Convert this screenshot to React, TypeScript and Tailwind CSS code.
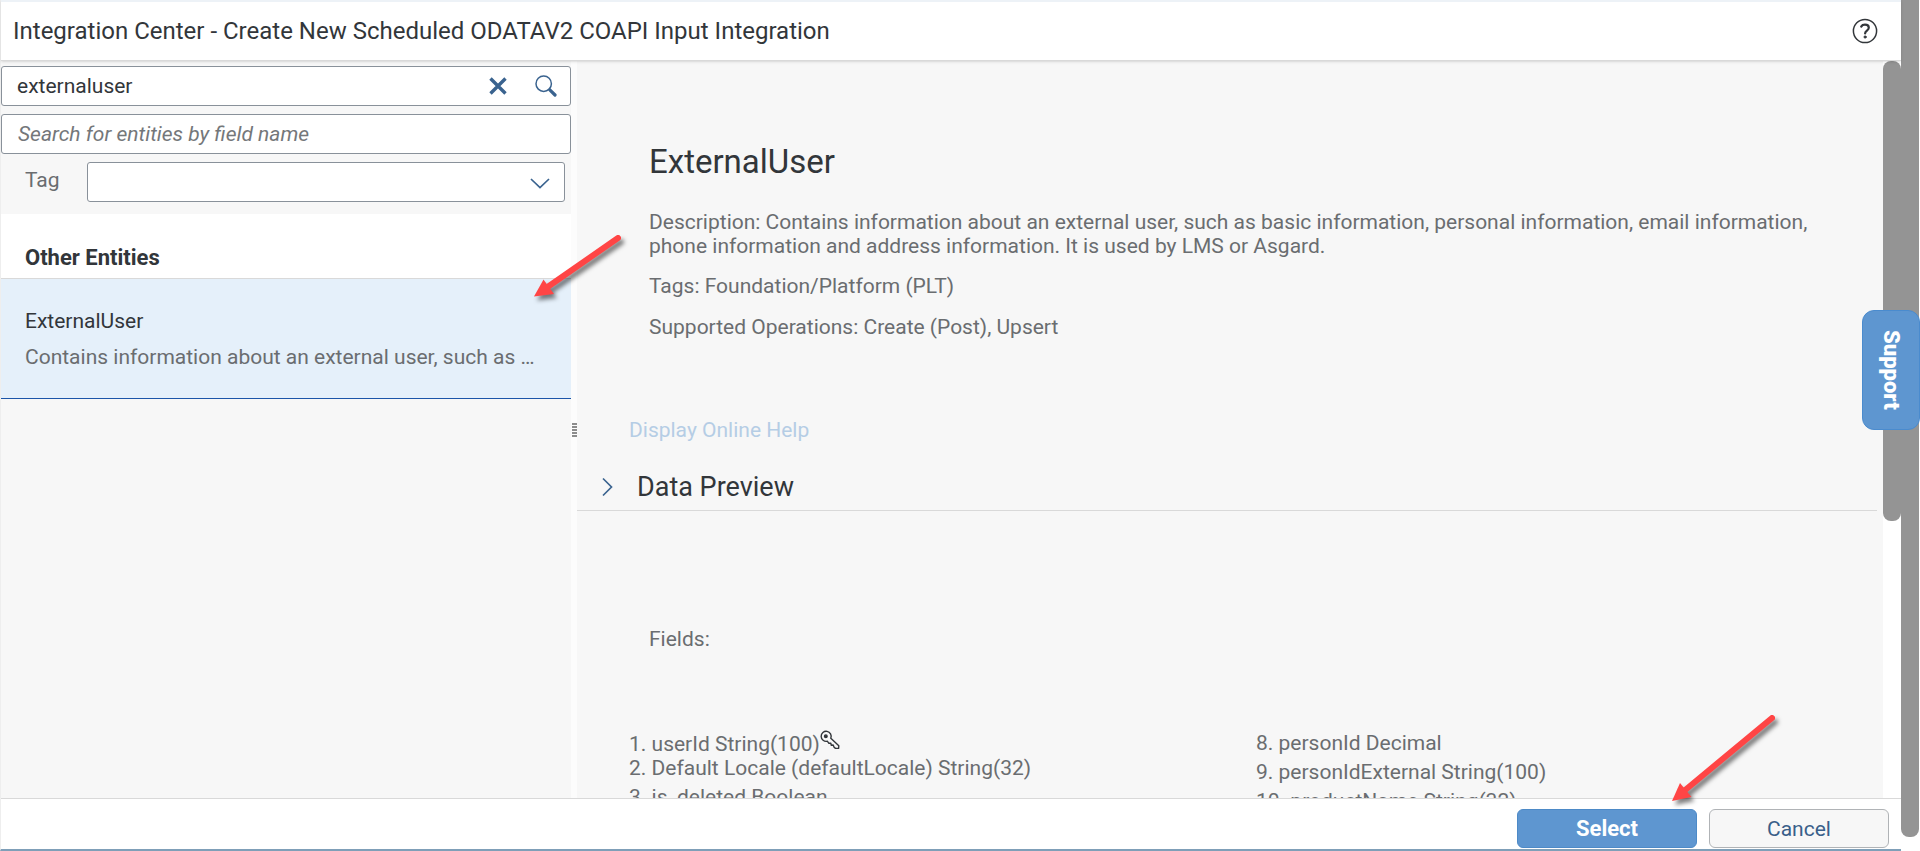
import { useState } from "react";

const leftFields = ["2. Default Locale (defaultLocale) String(32)", "3. is_deleted Boolean"];
const rightFields = ["8. personId Decimal", "9. personIdExternal String(100)", "10. productName String(32)"];

function ClearIcon() {
  return (
    <svg width="18" height="18" viewBox="0 0 18 18" fill="none" stroke="#3a638f" strokeWidth="3.4">
      <path d="M1.5 1.5l15 15M16.5 1.5l-15 15" />
    </svg>
  );
}

function SearchIcon() {
  return (
    <svg width="22" height="22" viewBox="0 0 22 22" fill="none" stroke="#3a638f" strokeLinecap="round">
      <circle cx="8.7" cy="8.7" r="7.7" strokeWidth="1.5" />
      <path d="M14.8 14.8l5.2 5.2" strokeWidth="3.2" />
    </svg>
  );
}

function HelpIcon() {
  return (
    <svg width="26" height="26" viewBox="0 0 26 26" fill="none" stroke="#32363a" strokeLinecap="round">
      <circle cx="13" cy="13" r="11.6" strokeWidth="1.5" />
      <path d="M9.2 8.6C10 7.2 11.4 6.7 13 6.7c2.2 0 3.8 1.2 3.8 3.1 0 2.7-3.7 2.9-3.7 5.6" strokeWidth="2.2" />
      <circle cx="13.1" cy="19" r="1.1" fill="#32363a" strokeWidth="1" />
    </svg>
  );
}

function KeyIcon() {
  return (
    <svg width="20" height="20" viewBox="0 0 20 20" fill="none" stroke="#32363a" strokeWidth="1.4" strokeLinejoin="round">
      <path d="M10.8 8.2A5 5 0 1 0 7.3 11.2l1.6 2.1 1.9-.1.4 2 2-.2.9 2.2 1.4 1.2h3.1l.2-2.6z" />
      <circle cx="5.8" cy="6.2" r="1.3" fill="#32363a" />
    </svg>
  );
}

export default function App() {
  const [query, setQuery] = useState("externaluser");

  return (
    <div className="relative flex h-screen overflow-hidden bg-white font-[Roboto,sans-serif] text-[21px] leading-6 text-[#6a6d70]">
      <div className="flex min-w-0 flex-1 flex-col border-b-2 border-l border-b-[#7f9fb8] border-l-[#eeeeee]">
        <header className="relative z-10 flex h-[61px] shrink-0 items-center justify-between border-t-2 border-b border-t-[#edf2f7] border-b-[#d9d9d9] bg-white pr-[23px] pl-3 shadow-sm">
          <h1 className="text-2xl text-[#32363a]">
            Integration Center - Create New Scheduled ODATAV2 COAPI Input Integration
          </h1>
          <button aria-label="Help">
            <HelpIcon />
          </button>
        </header>

        <div className="flex min-h-0 flex-1">
          <aside className="w-[570px] shrink-0 bg-[#f7f7f7]">
            <div className="flex flex-col gap-2 pt-[5px] pb-3">
              <div className="flex h-10 items-center rounded-[3px] border border-[#89919a] bg-white pr-[13px] pl-[15px]">
                <input
                  aria-label="Search entities"
                  className="min-w-0 flex-1 text-[#32363a] outline-none"
                  value={query}
                  onChange={(e) => setQuery(e.target.value)}
                />
                <button aria-label="Clear" className="mr-7" onClick={() => setQuery("")}>
                  <ClearIcon />
                </button>
                <button aria-label="Search">
                  <SearchIcon />
                </button>
              </div>
              <input
                aria-label="Search for entities by field name"
                placeholder="Search for entities by field name"
                className="h-10 rounded-[3px] border border-[#89919a] bg-white px-4 outline-none placeholder:text-[#74777a] placeholder:italic"
              />
              <div className="flex items-center pr-[6px] pl-6">
                <label htmlFor="tag" className="w-[62px] pb-1">
                  Tag
                </label>
                <div className="relative flex-1">
                  <select id="tag" className="block h-10 w-full appearance-none rounded-[3px] border border-[#89919a] bg-white px-3 outline-none">
                    <option></option>
                  </select>
                  <svg className="pointer-events-none absolute top-4 right-[15px]" width="20" height="11" viewBox="0 0 20 11" fill="none" stroke="#3a638f" strokeWidth="1.7">
                    <path d="M1 1l9 8.6L19 1" />
                  </svg>
                </div>
              </div>
            </div>

            <h2 className="flex h-[65px] items-end border-b border-[#d9d9d9] bg-white px-6 pb-2 text-[22px] font-bold text-[#32363a]">
              Other Entities
            </h2>
            <button className="flex h-[120px] w-full flex-col justify-center gap-3 border-b border-[#1b55a8] bg-[#e5f0fa] px-6 text-left">
              <span className="text-[#32363a]">ExternalUser</span>
              <span>Contains information about an external user, such as …</span>
            </button>
          </aside>

          <div className="flex w-[6px] shrink-0 flex-col items-end bg-[#fcfcfc] pt-[362px]">
            <div className="flex flex-col gap-px">
              {[0, 1, 2, 3, 4].map((i) => (
                <span key={i} className="h-[2px] w-[5px] bg-[#8c8c8c]" />
              ))}
            </div>
          </div>

          <main className="min-w-0 flex-1 overflow-hidden bg-[#f7f7f7]">
            <section className="pt-[81px] pr-16 pl-[72px]">
              <h2 className="text-[33px] leading-10 text-[#32363a]">ExternalUser</h2>
              <p className="mt-7">
                Description: Contains information about an external user, such as basic information, personal
                information, email information, phone information and address information. It is used by LMS or Asgard.
              </p>
              <p className="mt-4">Tags: Foundation/Platform (PLT)</p>
              <p className="mt-[17px]">Supported Operations: Create (Post), Upsert</p>
            </section>
            <a href="#help" className="mt-[79px] ml-[52px] block text-[#b5cde5]">
              Display Online Help
            </a>
            <div className="mt-[21px] mr-[6px] flex h-12 items-center border-b border-[#d9d9d9] pl-6">
              <button aria-label="Expand Data Preview" className="w-9">
                <svg width="13" height="20" viewBox="0 0 13 20" fill="none" stroke="#3a638f" strokeWidth="1.7">
                  <path d="M2 1.5l8.5 8.5L2 18.5" />
                </svg>
              </button>
              <h3 className="text-[27px] leading-8 text-[#32363a]">Data Preview</h3>
            </div>
            <p className="mt-[116px] ml-[72px]">Fields:</p>
            <div className="mt-20 grid grid-cols-2 pl-[52px]">
              <ul>
                <li className="flex h-[25px] items-center">
                  1. userId String(100)
                  <span className="pb-2">
                    <KeyIcon />
                  </span>
                </li>
                {leftFields.map((f) => (
                  <li key={f} className="h-[29px]">
                    {f}
                  </li>
                ))}
              </ul>
              <ul>
                {rightFields.map((f) => (
                  <li key={f} className="h-[29px]">
                    {f}
                  </li>
                ))}
              </ul>
            </div>
          </main>

          <div className="w-[18px] shrink-0 bg-white">
            <div className="h-[460px] rounded-lg bg-[#949494]" />
          </div>
        </div>

        <footer className="flex shrink-0 items-center justify-end gap-3 border-t border-[#d9d9d9] bg-white pt-[10px] pr-3 pb-px">
          <button className="h-[39px] w-[180px] rounded-md border border-[#4d8ac7] bg-[#5e96d0] text-[22px] font-bold text-white">Select</button>
          <button className="h-[39px] w-[180px] rounded-md border border-[#b0b3b6] bg-[#f7f7f7] text-[#3a5f8a]">Cancel</button>
        </footer>
      </div>

      <div className="w-[19px] shrink-0 pr-px">
        <div className="h-[837px] rounded-b-lg bg-[#949494]" />
      </div>

      <button className="absolute top-[310px] right-0 flex h-[120px] w-[58px] items-center justify-center rounded-xl border border-[#4a8bce] bg-[#5e96d0] text-[22px] font-black text-white [writing-mode:vertical-rl]">
        Support
      </button>

      <svg className="pointer-events-none absolute top-[225px] left-[525px] drop-shadow-[3px_4px_2px_rgba(0,0,0,0.5)]" width="105" height="85" viewBox="0 0 105 85">
        <path d="M93 13L24 61" stroke="#ff4545" strokeWidth="6" strokeLinecap="round" />
        <path d="M9 71.5L18.5 54.5L29 69Z" fill="#ff4545" />
      </svg>
      <svg className="pointer-events-none absolute right-[140px] bottom-[41px] drop-shadow-[3px_4px_2px_rgba(0,0,0,0.5)]" width="120" height="110" viewBox="0 0 120 110">
        <path d="M112 18L24 91" stroke="#ff4545" strokeWidth="6" strokeLinecap="round" />
        <path d="M12 101L20 83L31.5 97Z" fill="#ff4545" />
      </svg>
    </div>
  );
}
